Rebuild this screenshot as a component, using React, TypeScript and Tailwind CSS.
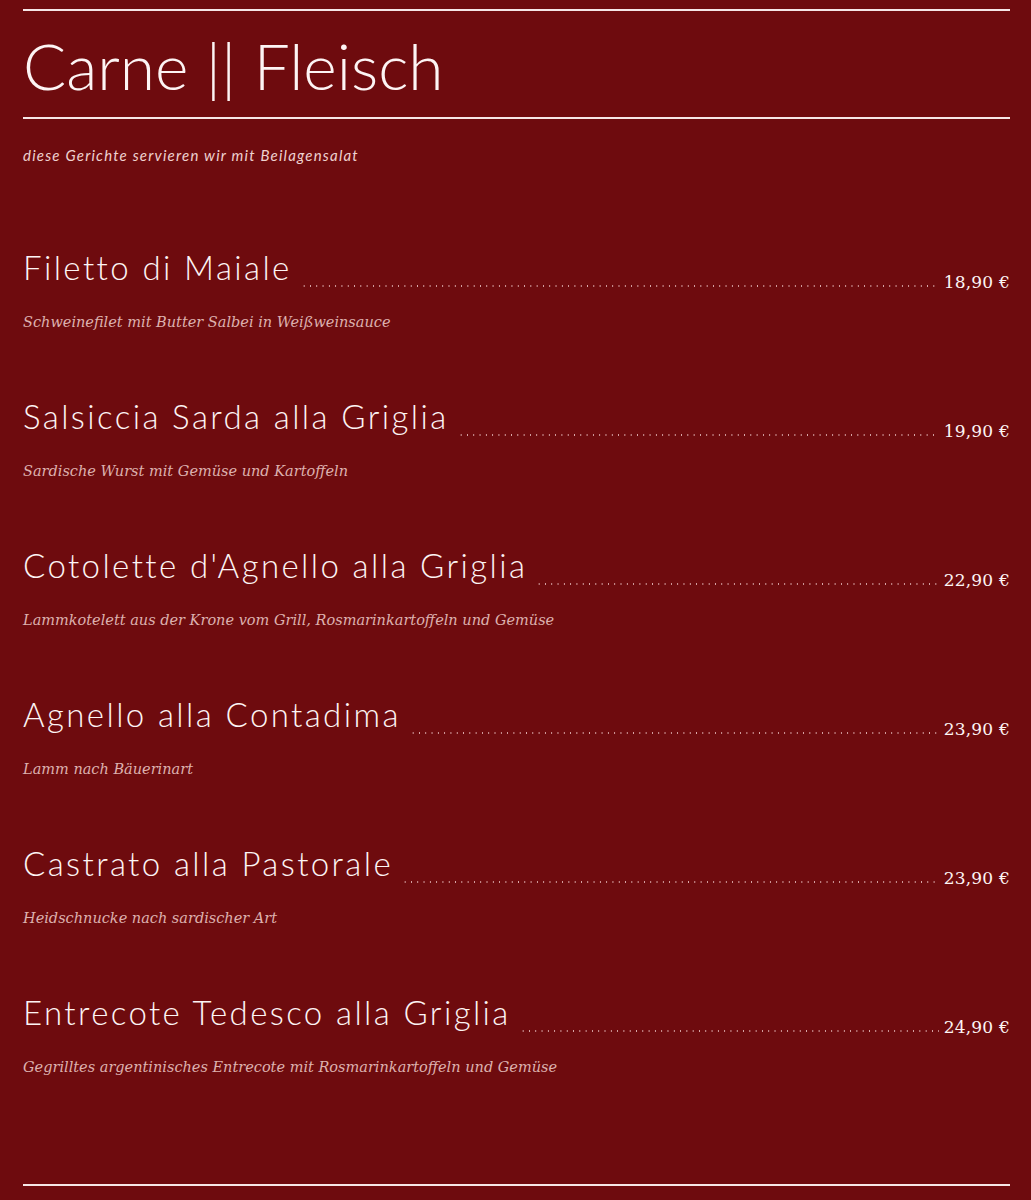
const items = [
  { name: "Filetto di Maiale", price: "18,90 €", desc: "Schweinefilet mit Butter Salbei in Weißweinsauce" },
  { name: "Salsiccia Sarda alla Griglia", price: "19,90 €", desc: "Sardische Wurst mit Gemüse und Kartoffeln" },
  { name: "Cotolette d'Agnello alla Griglia", price: "22,90 €", desc: "Lammkotelett aus der Krone vom Grill, Rosmarinkartoffeln und Gemüse" },
  { name: "Agnello alla Contadima", price: "23,90 €", desc: "Lamm nach Bäuerinart" },
  { name: "Castrato alla Pastorale", price: "23,90 €", desc: "Heidschnucke nach sardischer Art" },
  { name: "Entrecote Tedesco alla Griglia", price: "24,90 €", desc: "Gegrilltes argentinisches Entrecote mit Rosmarinkartoffeln und Gemüse" },
];

function MenuItem({ name, price, desc }: { name: string; price: string; desc: string }) {
  return (
    <div className="h-[149px]">
      <div className="flex items-end">
        <h3 className="font-['Lato',sans-serif] text-[33px] font-light leading-[40px] tracking-[2.4px] text-[#fdf4f4]">
          {name}
        </h3>
        {/* dotted leader */}
        <div className="mr-[5px] ml-[9px] h-[2px] flex-1 bg-[radial-gradient(circle,rgba(255,225,225,0.75)_0.6px,transparent_0.9px)] bg-[length:6.3px_2px] bg-repeat-x" />
        <span className="-mb-1 font-['DejaVu_Serif',serif] text-[17px] leading-none tracking-[0.2px] text-[#fdf4f4]">
          {price}
        </span>
      </div>
      <p className="mt-[25px] font-['DejaVu_Serif',serif] text-[14.5px] italic text-[#ddb1ae]">{desc}</p>
    </div>
  );
}

export default function App() {
  return (
    <div className="min-h-[1200px] bg-[#6e0b0e] pl-[23px] pr-[21px] pt-[9px]">
      <div className="h-[2px] bg-[#f6e6e6]" />

      {/* Heading */}
      <h1 className="pt-[18px] pb-[14px] font-['Lato',sans-serif] text-[64px] font-light leading-[74px] text-[#fdf4f4]">
        Carne || Fleisch
      </h1>
      <div className="h-[2px] bg-[#f6e6e6]" />
      <p className="mt-[25px] font-['Lato',sans-serif] text-[15px] italic tracking-[1.2px] text-[#eed2d0]">
        diese Gerichte servieren wir mit Beilagensalat
      </p>

      <div className="mt-[80px]">
        {items.map((it) => (
          <MenuItem key={it.name} {...it} />
        ))}
      </div>

      <div className="mt-[43px] h-[2px] bg-[#f6e6e6]" />
    </div>
  );
}
